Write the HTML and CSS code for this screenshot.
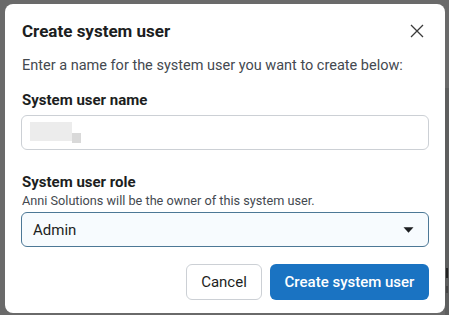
FILE: index.html
```html
<!DOCTYPE html>
<html>
<head>
<meta charset="utf-8">
<link rel="stylesheet" href="styles.css">
</head>
<body>
<div class="backdrop">
  <div class="page-bg">
    <span class="bg-mark bg-mark-i"></span>
    <span class="bg-mark bg-mark-s"></span>
  </div>
  <div class="dialog">
    <div class="header">
      <h1 class="title">Create system user</h1>
      <button class="close" aria-label="Close">
        <svg width="14" height="14" viewBox="0 0 14 14"><path d="M1 1 L13 13 M13 1 L1 13" stroke="#3a3a3a" stroke-width="1.3" fill="none"/></svg>
      </button>
    </div>
    <p class="desc">Enter a name for the system user you want to create below:</p>
    <div class="field">
      <label class="label">System user name</label>
      <div class="input">
        <span class="blur">
          <span class="blur-a"></span><span class="blur-b"></span>
        </span>
      </div>
    </div>
    <div class="field field-role">
      <label class="label">System user role</label>
      <div class="hint">Anni Solutions will be the owner of this system user.</div>
      <div class="select">
        <span class="select-value">Admin</span>
        <svg class="caret" width="11" height="6" viewBox="0 0 11 6"><path d="M0.5 0.3 H10.5 L5.5 5.8 Z" fill="#1c1e21"/></svg>
      </div>
    </div>
    <div class="actions">
      <button class="btn btn-cancel">Cancel</button>
      <button class="btn btn-primary">Create system user</button>
    </div>
  </div>
</div>
</body>
</html>
```
FILE: styles.css
```css
* { box-sizing: border-box; }
html, body { margin: 0; padding: 0; }
body {
  width: 449px;
  height: 315px;
  overflow: hidden;
  background: #6a6a6a;
  font-family: Roboto, "Liberation Sans", Arial, sans-serif;
  color: #1c1e21;
}
.backdrop {
  position: relative;
  width: 449px;
  height: 315px;
  padding: 4px 0 0 5px;
}
.page-bg {
  position: absolute;
  right: 0;
  top: 88px;
  width: 4px;
  height: 227px;
  background: #5e5f5f;
}
.bg-mark {
  position: absolute;
  left: 1px;
  width: 2px;
  background: #222;
}
.bg-mark-i { top: 180px; height: 10px; }
.bg-mark-s { top: 198px; height: 7px; background: #444; }
.dialog {
  position: relative;
  width: 440px;
  height: 309px;
  background: #fff;
  border-radius: 8px;
  padding: 0 16px 0 16px;
}
.header {
  display: flex;
  align-items: center;
  justify-content: space-between;
  height: 52px;
  padding-top: 2px;
}
.title {
  margin: 0;
  padding-left: 1px;
  font-size: 17px;
  font-weight: 700;
  color: #1c1e21;
}
.close {
  border: 0;
  background: none;
  padding: 0;
  width: 14px;
  height: 14px;
  margin-right: 5px;
  display: flex;
}
.desc {
  margin: 0;
  padding-left: 1px;
  font-size: 14.5px;
  color: #444950;
  line-height: 20px;
}
.field { margin-top: 14px; }
.field-role { margin-top: 22px; }
.label {
  display: block;
  padding-left: 1px;
  font-size: 15px;
  font-weight: 700;
  line-height: 20px;
  color: #1c1e21;
}
.input {
  margin-top: 5px;
  height: 35px;
  border: 1px solid #ccd0d5;
  border-radius: 6px;
  display: flex;
  align-items: center;
  padding-left: 8px;
}
.blur { display: flex; align-items: flex-end; height: 21px; }
.blur-a { width: 42px; height: 19px; background: #ececec; align-self: flex-start; }
.blur-b { width: 9px; height: 10px; background: #d9d9d9; }
.hint {
  padding-left: 1px;
  font-size: 12.7px;
  line-height: 17px;
  color: #444950;
}
.select {
  margin-top: 3px;
  height: 35px;
  border: 1px solid #4c7896;
  border-radius: 6px;
  background: #f7fbfe;
  display: flex;
  align-items: center;
  justify-content: space-between;
  padding: 0 14px 0 11px;
}
.select-value { font-size: 15px; color: #1c1e21; }
.actions {
  display: flex;
  justify-content: flex-end;
  gap: 8px;
  margin-top: 17px;
}
.btn {
  height: 36px;
  border-radius: 6px;
  font-family: inherit;
  font-size: 15px;
  font-weight: 500;
  padding: 0;
  white-space: nowrap;
}
.btn-cancel {
  width: 76px;
  background: #fff;
  border: 1px solid #ccd0d5;
  color: #1c1e21;
  font-weight: 400;
}
.btn-primary {
  width: 159px;
  background: #1a73c2;
  border: 0;
  color: #fff;
}
```
